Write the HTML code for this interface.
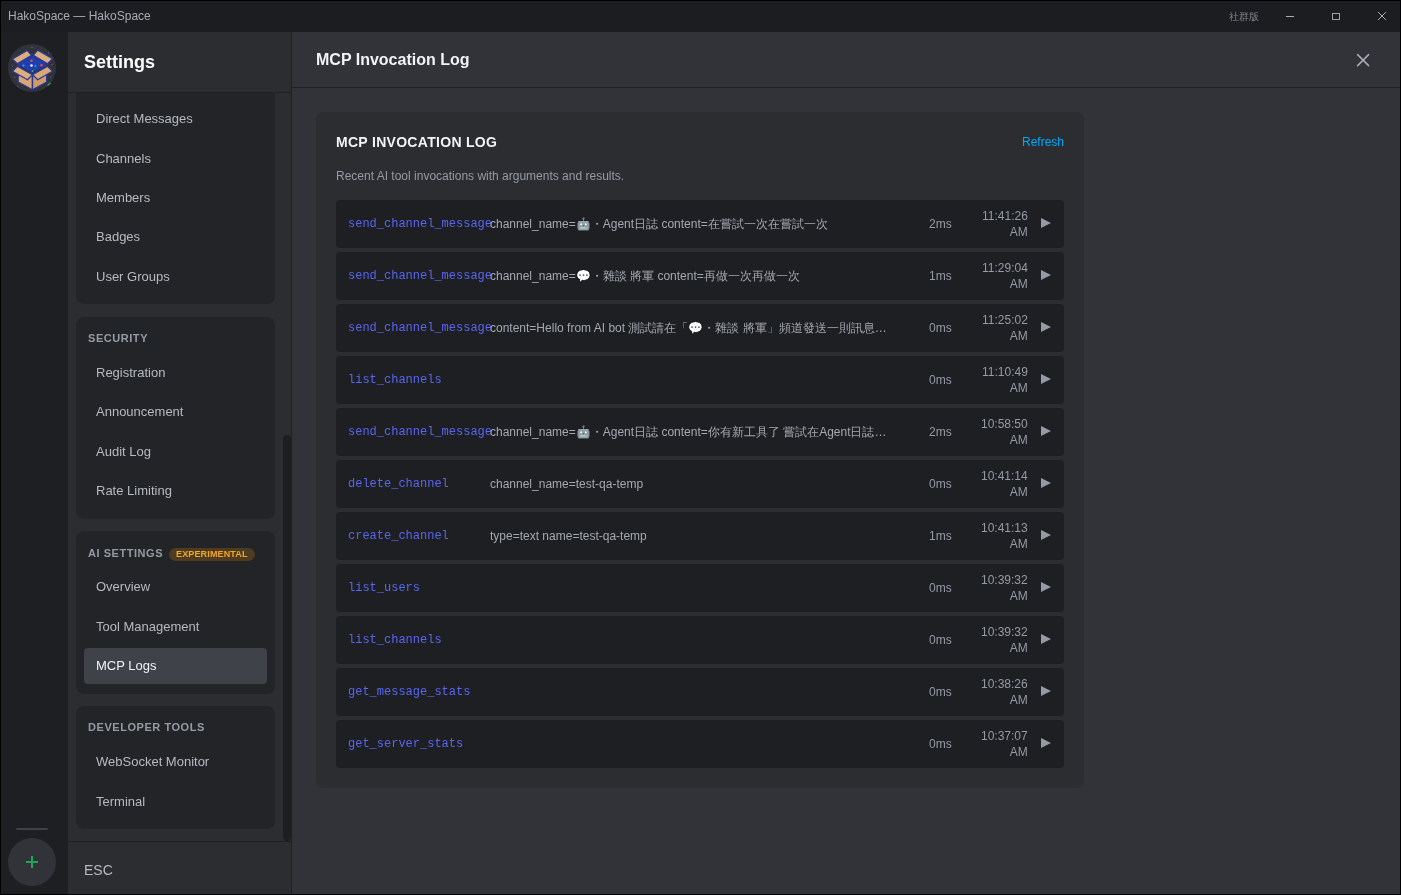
<!DOCTYPE html>
<html><head><meta charset="utf-8">
<style>
*{box-sizing:border-box;margin:0;padding:0}
html,body{width:1401px;height:895px;overflow:hidden;background:#000;font-family:"Liberation Sans",sans-serif;-webkit-font-smoothing:antialiased}
.abs,span,.it,.ch{will-change:transform}
#win{position:absolute;left:1px;top:1px;width:1399px;height:893px;background:#1e1f22;overflow:hidden}
.abs{position:absolute;white-space:nowrap}
#title{position:absolute;left:0;top:0;width:1399px;height:31px;background:#1c1d20;color:#a6abb3;font-size:12px}
#rail{position:absolute;left:0;top:31px;width:67px;height:862px;background:#1e1f22}
#side{position:absolute;left:67px;top:31px;width:223px;height:862px;background:#2b2d31;overflow:hidden}
#sidehead{position:absolute;left:0;top:0;width:223px;height:61px;border-bottom:1px solid #1f2023;background:#2b2d31;z-index:2}
#sidehead .t{position:absolute;left:16px;top:20px;font-size:18px;font-weight:bold;color:#ffffff;line-height:21px}
#scroll{position:absolute;left:0;top:61px;width:223px;height:748px;overflow:hidden}
#thumb{position:absolute;left:215px;top:403px;width:8px;height:405.5px;border-radius:4px;background:#1e1f22}
.card{position:absolute;left:8px;width:199px;background:#232428;border-radius:8px;padding:8px;display:flex;flex-direction:column}
.ch{height:28.67px;line-height:28.67px;padding-left:4px;font-size:11px;font-weight:bold;color:#949ba4;letter-spacing:0.55px;text-transform:uppercase}
.it{height:36px;margin:1.67px 0;padding-left:12px;line-height:36px;font-size:13px;color:#b5bac1;border-radius:4px}
.it.sel{background:#404249;color:#f2f3f5}
.badge{display:inline-block;vertical-align:top;margin-top:9.4px;margin-left:6px;height:13.2px;line-height:13.2px;padding:0 7px;border-radius:7px;background:#4d3c22;color:#f5a623;font-size:9px;letter-spacing:0.15px}
#foot{position:absolute;left:0;top:809px;width:223px;height:53px;border-top:1px solid #1f2023;background:#2b2d31}
#foot .t{position:absolute;left:16px;top:20px;font-size:14px;color:#b5bac1;line-height:16px}
#main{position:absolute;left:290px;top:31px;width:1109px;height:862px;background:#313338;border-left:1px solid #1f2023}
#mhead{position:absolute;left:0;top:0;width:1108px;height:56px;border-bottom:1px solid #1f2023}
#mhead .t{position:absolute;left:24px;top:19px;font-size:16px;font-weight:bold;color:#f2f3f5;line-height:18px}
#panel{position:absolute;left:24px;top:80px;width:768px;height:676px;background:#2b2d31;border-radius:8px}
#panel .h{position:absolute;left:20px;top:22px;font-size:14px;font-weight:bold;color:#f2f3f5;letter-spacing:0.3px;line-height:17px}
#panel .ref{position:absolute;right:20px;top:23px;font-size:12px;color:#00a8fc;line-height:14px}
#panel .d{position:absolute;left:20px;top:57px;font-size:12px;color:#949ba4;line-height:14px}
.row{position:absolute;left:20px;width:728px;height:48px;background:#1e1f22;border-radius:4px}
.row .n{position:absolute;left:12px;top:17px;font-family:"Liberation Mono",monospace;font-size:12px;color:#5865f2;line-height:14px}
.row .a{position:absolute;white-space:nowrap;left:154px;top:17px;width:398px;overflow:hidden;text-overflow:ellipsis;font-size:12px;color:#a3a8b0;line-height:14px}
.row .ms{position:absolute;right:112px;top:17px;font-size:12px;color:#949ba4;line-height:14px}
.row .tm{position:absolute;right:36px;top:8px;font-size:12px;color:#949ba4;line-height:16px;text-align:right}
.row .pl{position:absolute;left:705px;top:17.6px;width:0;height:0;border-left:10.2px solid #949ba4;border-top:5.9px solid transparent;border-bottom:5.9px solid transparent}
</style></head><body>
<div id="win">
 <div id="title">
  <span class="abs" style="left:7px;top:8px;line-height:14px">HakoSpace — HakoSpace</span>
  <span class="abs" style="left:1228px;top:10px;line-height:12px;font-size:10px;color:#80848e">社群版</span>
 </div>
 <div id="rail">
  <svg class="abs" style="left:5px;top:10px" width="52" height="52" viewBox="0 0 52 52">
  <circle cx="26" cy="26" r="24" fill="#313338"/>
  <g stroke="#2b3793" stroke-width="1.3" stroke-linejoin="round">
   <polygon points="12.2,31 26.5,31.5 26.5,47.7 12.2,40" fill="#d7a774"/>
   <polygon points="26.5,31.5 40.7,31 40.7,40 26.5,47.7" fill="#cf9d6b"/>
   <polygon points="11.3,24.2 26.5,32.6 21.5,37.8 6.4,29.2" fill="#dcae7e"/>
   <polygon points="41.6,24.2 26.5,32.6 31.7,37.8 46.5,29.2" fill="#d8a977"/>
   <polygon points="26.5,13.7 41.6,22.1 26.5,30.5 11.3,22.1" fill="#1f3fae"/>
   <polygon points="6.4,16.9 21.2,8.4 25.6,13.4 11.3,21.8" fill="#dcae7e"/>
   <polygon points="27.2,13.2 31.7,8.1 46.5,16.6 41.6,21.8" fill="#dcae7e"/>
  </g>
  <path d="M26.5 31V47.7" stroke="#2b3793" stroke-width="1.2"/>
  <circle cx="17.5" cy="23.5" r="1.1" fill="#3aa0ff"/>
  <circle cx="25.5" cy="18.8" r="1.2" fill="#e0533a"/>
  <circle cx="35.5" cy="23.3" r="1.2" fill="#e0533a"/>
  <circle cx="25.5" cy="23.5" r="1.3" fill="#e8eefc"/>
  <circle cx="26.5" cy="29" r="0.9" fill="#2bb673"/>
  <circle cx="29.5" cy="24" r="1.2" fill="#3c78e6"/>
  <path d="M41.5 43.5L44.5 41" stroke="#23a559" stroke-width="1.6"/>
  <circle cx="26" cy="5.5" r="0.7" fill="#4a6ad0"/>
  <circle cx="42.5" cy="10.8" r="0.6" fill="#5a7ad8"/>
  <circle cx="6.5" cy="24" r="0.6" fill="#5a6ad0"/>
  <circle cx="8.8" cy="35.2" r="0.6" fill="#5a6ad0"/>
  <circle cx="12" cy="44.5" r="0.6" fill="#5a6ad0"/>
  <circle cx="45.8" cy="22.5" r="0.6" fill="#5a6ad0"/>
  <circle cx="44.5" cy="35" r="0.6" fill="#5a6ad0"/>
 </svg>
  <div class="abs" style="left:15px;top:796px;width:32px;height:2px;border-radius:1px;background:#3f4147"></div>
  <div class="abs" style="left:7px;top:806px;width:48px;height:48px;border-radius:24px;background:#313338"></div>
 </div>
 <div id="side">
  <div id="sidehead"><span class="t">Settings</span></div>
  <div id="scroll">
   <div class="card" style="top:-29.9px">
    <div class="ch">Server</div>
    <div class="it">Direct Messages</div>
    <div class="it">Channels</div>
    <div class="it">Members</div>
    <div class="it">Badges</div>
    <div class="it">User Groups</div>
   </div>
   <div class="card" style="top:223.7px">
    <div class="ch"><span style="position:relative;top:-0.7px">Security</span></div>
    <div class="it">Registration</div>
    <div class="it">Announcement</div>
    <div class="it">Audit Log</div>
    <div class="it">Rate Limiting</div>
   </div>
   <div class="card" style="top:438px">
    <div class="ch">AI Settings<span class="badge">EXPERIMENTAL</span></div>
    <div class="it">Overview</div>
    <div class="it">Tool Management</div>
    <div class="it sel">MCP Logs</div>
   </div>
   <div class="card" style="top:613px">
    <div class="ch"><span style="position:relative;top:-0.7px">Developer Tools</span></div>
    <div class="it">WebSocket Monitor</div>
    <div class="it">Terminal</div>
   </div>
  </div>
  <div id="thumb"></div>
  <div id="foot"><span class="t">ESC</span></div>
 </div>
 <div id="main">
  <div id="mhead"><span class="t">MCP Invocation Log</span></div>
  <div id="panel">
   <span class="h">MCP INVOCATION LOG</span>
   <span class="ref">Refresh</span>
   <span class="d">Recent AI tool invocations with arguments and results.</span>
   <div class="row" style="top:88px"><span class="n">send_channel_message</span><span class="a">channel_name=🤖・Agent日誌 content=在嘗試一次在嘗試一次</span><span class="ms">2ms</span><span class="tm">11:41:26<br>AM</span><span class="pl"></span></div>
   <div class="row" style="top:140px"><span class="n">send_channel_message</span><span class="a">channel_name=💬・雜談 將軍 content=再做一次再做一次</span><span class="ms">1ms</span><span class="tm">11:29:04<br>AM</span><span class="pl"></span></div>
   <div class="row" style="top:192px"><span class="n">send_channel_message</span><span class="a">content=Hello from AI bot 測試請在「💬・雜談 將軍」頻道發送一則訊息，確認功能正常</span><span class="ms">0ms</span><span class="tm">11:25:02<br>AM</span><span class="pl"></span></div>
   <div class="row" style="top:244px"><span class="n">list_channels</span><span class="a"></span><span class="ms">0ms</span><span class="tm">11:10:49<br>AM</span><span class="pl"></span></div>
   <div class="row" style="top:296px"><span class="n">send_channel_message</span><span class="a">channel_name=🤖・Agent日誌 content=你有新工具了 嘗試在Agent日誌頻道發送訊息</span><span class="ms">2ms</span><span class="tm">10:58:50<br>AM</span><span class="pl"></span></div>
   <div class="row" style="top:348px"><span class="n">delete_channel</span><span class="a">channel_name=test-qa-temp</span><span class="ms">0ms</span><span class="tm">10:41:14<br>AM</span><span class="pl"></span></div>
   <div class="row" style="top:400px"><span class="n">create_channel</span><span class="a">type=text name=test-qa-temp</span><span class="ms">1ms</span><span class="tm">10:41:13<br>AM</span><span class="pl"></span></div>
   <div class="row" style="top:452px"><span class="n">list_users</span><span class="a"></span><span class="ms">0ms</span><span class="tm">10:39:32<br>AM</span><span class="pl"></span></div>
   <div class="row" style="top:504px"><span class="n">list_channels</span><span class="a"></span><span class="ms">0ms</span><span class="tm">10:39:32<br>AM</span><span class="pl"></span></div>
   <div class="row" style="top:556px"><span class="n">get_message_stats</span><span class="a"></span><span class="ms">0ms</span><span class="tm">10:38:26<br>AM</span><span class="pl"></span></div>
   <div class="row" style="top:608px"><span class="n">get_server_stats</span><span class="a"></span><span class="ms">0ms</span><span class="tm">10:37:07<br>AM</span><span class="pl"></span></div>
  </div>
 </div>
</div>
<svg id="ov" width="1401" height="895" viewBox="0 0 1401 895" style="position:absolute;left:0;top:0;z-index:10">
 <path d="M1286 16.5H1294" stroke="#a9adb4" stroke-width="1"/>
 <rect x="1332.5" y="13.5" width="7" height="6" fill="none" stroke="#9a9ea5" stroke-width="1"/>
 <path d="M1378 12L1386 20M1386 12L1378 20" stroke="#a9adb4" stroke-width="1"/>
 <path d="M1357.6 54.6L1368.6 65.6M1368.6 54.6L1357.6 65.6" stroke="#a8adb5" stroke-width="1.5" stroke-linecap="round"/>
 <path d="M32 856V868M26 862H38" stroke="#23a559" stroke-width="2"/>
</svg>
</body></html>
